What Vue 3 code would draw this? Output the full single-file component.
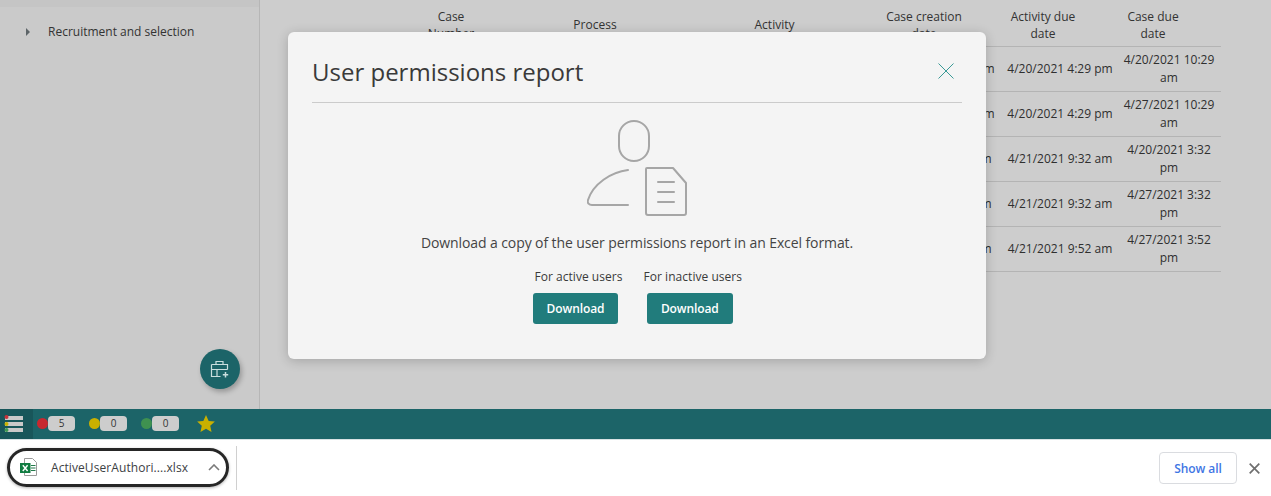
<template>
  <div class="page">
    <main class="main">
      <!-- Sidebar -->
      <aside class="sidebar">
        <div class="sidebar-top"></div>
        <div class="tree-item">
          <span class="caret"></span>
          <span>Recruitment and selection</span>
        </div>
        <button class="fab" aria-label="New case">
          <svg width="20" height="20" viewBox="0 0 20 20" fill="none" stroke="#c9dede" stroke-width="1.2">
            <path d="M1.5 5.5h16v5M1.5 5.5v12h9M1.5 10.5h16M6 5.5V2.5h7v3M7 10.5v7" />
            <path d="M15.5 13v5.5M12.8 15.8h5.4" stroke-width="1.5" />
          </svg>
        </button>
      </aside>

      <!-- Cases table -->
      <section class="content">
        <div class="table">
          <div class="row head">
            <div v-for="h in headers" :key="h" class="th">{{ h }}</div>
          </div>
          <div v-for="(r, i) in rows" :key="i" class="row">
            <div class="td"></div>
            <div class="td"></div>
            <div class="td"></div>
            <div class="td">{{ r.created }}</div>
            <div class="td">{{ r.activityDue }}</div>
            <div class="td">{{ r.caseDue }}</div>
          </div>
        </div>
      </section>

      <!-- Report dialog -->
      <div class="modal">
        <header class="modal-head">
          <h2>User permissions report</h2>
          <svg class="close" width="16" height="16" viewBox="0 0 16 16" stroke="#3a9a96" stroke-width="1" fill="none">
            <path d="M.5.5l15 15M15.5.5l-15 15" />
          </svg>
        </header>
        <div class="modal-body">
          <svg class="report-icon" width="100" height="96" viewBox="0 0 100 96" fill="none" stroke="#a6a6a6" stroke-width="2" stroke-linecap="round" stroke-linejoin="round">
            <rect x="32" y="1" width="30" height="40" rx="15" />
            <path d="M41 50C24 52 6 64 1 80c-1 3 1 5 4 5h36" />
            <path d="M60 48h26l13 15v30a2 2 0 0 1-2 2H61a2 2 0 0 1-2-2V49a1 1 0 0 1 1-1z" />
            <path d="M71 62h16M71 72h16M71 82h16" />
          </svg>
          <p class="desc">Download a copy of the user permissions report in an Excel format.</p>
          <div class="actions">
            <div class="action">
              <span class="label">For active users</span>
              <button class="dl">Download</button>
            </div>
            <div class="action">
              <span class="label">For inactive users</span>
              <button class="dl wide">Download</button>
            </div>
          </div>
        </div>
      </div>
    </main>

    <!-- Status bar -->
    <div class="status">
      <div class="list-btn">
        <svg width="20" height="18" viewBox="0 0 20 18">
          <rect x="1" y="1" width="18" height="4" fill="#c9c9c9" />
          <rect x="1" y="7" width="18" height="4" fill="#c9c9c9" />
          <rect x="1" y="13" width="18" height="4" fill="#c9c9c9" />
          <circle cx="2.5" cy="2" r="2" fill="#c8323a" />
          <circle cx="2.5" cy="9" r="2" fill="#c9b400" />
          <circle cx="2.5" cy="15" r="2" fill="#3f9a54" />
        </svg>
      </div>
      <div class="counters">
        <div v-for="c in counters" :key="c.color" class="counter">
          <span class="dot" :style="{ background: c.color }"></span>
          <span class="pill">{{ c.count }}</span>
        </div>
        <svg class="star" width="18" height="17" viewBox="0 0 24 23">
          <path fill="#c9b000" d="M12 0l3.6 8 8.4.8-6.3 5.8 1.8 8.4L12 18.6 4.5 23l1.8-8.4L0 8.8 8.4 8z" />
        </svg>
      </div>
    </div>

    <!-- Browser download shelf -->
    <footer class="shelf">
      <div class="file">
        <svg class="xls" width="17" height="18" viewBox="0 0 17 18">
          <path d="M4.5.5h8l4 4v13h-12z" fill="#fff" stroke="#9a9a9a" />
          <path d="M11 7.5h4.5M11 10h4.5M11 12.5h4.5" stroke="#21794a" />
          <rect x="0" y="5" width="10.5" height="10" fill="#107c41" />
          <path d="M2.8 7.2l4.8 5.8M7.6 7.2L2.8 13" stroke="#fff" stroke-width="1.4" />
        </svg>
        <span class="file-name">ActiveUserAuthori....xlsx</span>
        <svg class="chev" width="12" height="7" viewBox="0 0 12 7" fill="none" stroke="#7a7a7a" stroke-width="1.6">
          <path d="M1 6l5-5 5 5" />
        </svg>
      </div>
      <div class="sep"></div>
      <div class="shelf-right">
        <button class="show-all">Show all</button>
        <svg width="11" height="11" viewBox="0 0 11 11" stroke="#6f6f6f" stroke-width="1.7">
          <path d="M.7.7l9.6 9.6M10.3.7L.7 10.3" />
        </svg>
      </div>
      <div class="ring"></div>
    </footer>
  </div>
</template>

<script setup>
const headers = ['Case Number', 'Process', 'Activity', 'Case creation date', 'Activity due date', 'Case due date']

const rows = [
  { created: '4/13/2021 10:29 am', activityDue: '4/20/2021 4:29 pm', caseDue: '4/20/2021 10:29 am' },
  { created: '4/13/2021 10:29 am', activityDue: '4/20/2021 4:29 pm', caseDue: '4/27/2021 10:29 am' },
  { created: '4/13/2021 3:32 pm', activityDue: '4/21/2021 9:32 am', caseDue: '4/20/2021 3:32 pm' },
  { created: '4/13/2021 3:32 pm', activityDue: '4/21/2021 9:32 am', caseDue: '4/27/2021 3:32 pm' },
  { created: '4/13/2021 3:52 pm', activityDue: '4/21/2021 9:52 am', caseDue: '4/27/2021 3:52 pm' }
]

const counters = [
  { color: '#c8282f', count: 5 },
  { color: '#c9b000', count: 0 },
  { color: '#3f9150', count: 0 }
]
</script>

<style>
html, body {
  margin: 0;
  overflow: hidden;
}
</style>

<style scoped>
.page {
  width: 1271px;
  height: 496px;
  display: flex;
  flex-direction: column;
  font-family: "Open Sans", "Noto Sans", sans-serif;
  color: #333;
  font-size: 12px;
}

.main {
  position: relative;
  height: 409px;
  display: flex;
  background: #cdcdcd;
}

.sidebar {
  position: relative;
  width: 259px;
  flex-shrink: 0;
  background: #cacaca;
  border-right: 1px solid #b6b6b6;
}

.sidebar-top {
  height: 7px;
  background: #c5c5c5;
}

.tree-item {
  display: flex;
  align-items: center;
  gap: 18px;
  height: 17px;
  margin-top: 16px;
  padding-left: 26px;
}

.caret {
  width: 0;
  height: 0;
  border-left: 4px solid #5d6468;
  border-top: 4px solid transparent;
  border-bottom: 4px solid transparent;
}

.fab {
  position: absolute;
  left: 200px;
  top: 349px;
  width: 40px;
  height: 40px;
  border: none;
  border-radius: 50%;
  background: #1c6468;
  display: flex;
  align-items: center;
  justify-content: center;
  padding: 0;
  box-shadow: 2px 3px 5px rgba(0, 0, 0, 0.25);
}

.content {
  flex: 1;
  display: flex;
  justify-content: flex-end;
  padding-right: 50px;
}

.table {
  width: 805px;
}

.row {
  display: grid;
  grid-template-columns: 102px 186px 173px 124px 116px 104px;
  height: 44px;
  align-items: center;
  border-bottom: 1px solid #b4b4b4;
  text-align: center;
  line-height: 18px;
}

.row.head {
  height: 46px;
  line-height: 17px;
  align-items: end;
}

.th {
  padding: 0 32px 4px 0;
}

.th:nth-child(1) {
  padding-left: 8px;
  padding-right: 40px;
}

.th:nth-child(2),
.th:nth-child(3) {
  align-self: center;
  padding-bottom: 0;
  padding-top: 2px;
}

.th:nth-child(4) {
  padding-right: 30px;
}

.td {
  padding: 0 2px;
  color: #2f2f2f;
}

.td:nth-child(5) {
  padding-left: 4px;
}

.modal {
  position: absolute;
  left: 288px;
  top: 32px;
  width: 698px;
  height: 327px;
  box-sizing: border-box;
  padding: 0 24px;
  background: #f4f4f4;
  border-radius: 6px;
  box-shadow: 0 2px 12px rgba(0, 0, 0, 0.2);
}

.modal-head {
  height: 71px;
  box-sizing: border-box;
  padding: 8px 8px 0 0;
  display: flex;
  align-items: center;
  justify-content: space-between;
  border-bottom: 1px solid #cbcbcb;
}

.modal-head h2 {
  margin: 1px 0 0;
  font-size: 24px;
  font-weight: 400;
  color: #3a3a3a;
}

.modal-body {
  display: flex;
  flex-direction: column;
  align-items: center;
  padding-top: 17px;
}

.report-icon {
  display: block;
}

.desc {
  margin: 17px 0 0;
  font-size: 14px;
  line-height: 20px;
  letter-spacing: -0.1px;
  color: #444;
}

.actions {
  display: flex;
  gap: 15px;
  margin-top: 15px;
  padding-right: 3.5px;
}

.action {
  display: flex;
  flex-direction: column;
  align-items: center;
}

.label {
  padding-left: 6px;
  line-height: 17px;
  letter-spacing: 0.04px;
  color: #3a3a3a;
}

.dl {
  width: 85px;
  height: 31px;
  margin-top: 8px;
  padding: 0;
  border: none;
  border-radius: 3px;
  background: #217c7c;
  color: #fff;
  font-family: inherit;
  font-size: 12px;
  font-weight: 600;
  letter-spacing: -0.1px;
}

.dl.wide {
  width: 86px;
}

.status {
  height: 30px;
  display: flex;
  background: #1c6468;
}

.list-btn {
  width: 33px;
  box-sizing: border-box;
  padding-left: 4px;
  display: flex;
  align-items: center;
  background: #18565a;
}

.counters {
  display: flex;
  align-items: center;
  padding-left: 4px;
}

.counter {
  display: flex;
  align-items: center;
  width: 52px;
  margin-top: -2px;
}

.dot {
  width: 11px;
  height: 11px;
  border-radius: 50%;
}

.pill {
  width: 27px;
  height: 15px;
  border-radius: 4px;
  background: #cdcdcd;
  color: #333;
  font-size: 10px;
  line-height: 15px;
  text-align: center;
}

.star {
  margin: -2px 0 0 4px;
}

.shelf {
  position: relative;
  flex: 1;
  display: flex;
  align-items: center;
  background: #fff;
  border-top: 1px solid #d8e2e4;
}

.file {
  width: 236px;
  height: 100%;
  box-sizing: border-box;
  display: flex;
  align-items: center;
  padding: 0 0 1px 20px;
  flex-shrink: 0;
}

.xls {
  margin-top: -2px;
}

.file-name {
  margin-left: 14px;
  width: 144px;
  font-size: 12px;
  letter-spacing: 0.08px;
  color: #3c4043;
}

.chev {
  margin-left: 13px;
}

.sep {
  width: 1px;
  height: 44px;
  background: #d0d0d0;
}

.shelf-right {
  margin-left: auto;
  display: flex;
  align-items: center;
  gap: 12px;
  padding-right: 11px;
}

.show-all {
  width: 78px;
  height: 32px;
  padding: 0;
  background: #fff;
  border: 1px solid #dadce0;
  border-radius: 4px;
  color: #3f76e4;
  font-family: inherit;
  font-size: 12px;
  font-weight: 600;
  letter-spacing: -0.1px;
}

.ring {
  position: absolute;
  left: 7px;
  top: 8px;
  width: 222px;
  height: 39px;
  box-sizing: border-box;
  border: 3px solid #262626;
  border-radius: 20px;
  box-shadow: 0 1px 3px rgba(0, 0, 0, 0.3);
}
</style>
